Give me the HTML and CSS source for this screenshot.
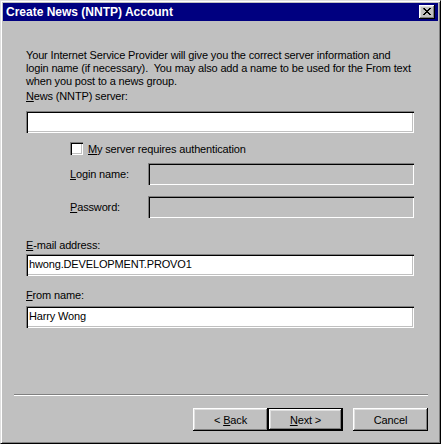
FILE: index.html
```html
<!DOCTYPE html>
<html>
<head>
<meta charset="utf-8">
<link rel="stylesheet" href="styles.css">
</head>
<body>
<div class="window">
  <div class="titlebar">
    <span class="title">Create News (NNTP) Account</span>
    <div class="close">
      <svg width="8" height="7" viewBox="0 0 8 7"><path d="M0 0h2v1h1v1h2v-1h1v-1h2v1h-1v1h-1v1h-1v1h1v1h1v1h1v1h-2v-1h-1v-1h-2v1h-1v1h-2v-1h1v-1h1v-1h1v-1h-1v-1h-1z" fill="#000"/></svg>
    </div>
  </div>
  <div class="content">
    <p class="intro">Your Internet Service Provider will give you the correct server information and<br>login name (if necessary).&nbsp; You may also add a name to be used for the From text<br>when you post to a news group.</p>
    <div class="label label-news"><u>N</u>ews (NNTP) server:</div>
    <div class="edit"></div>
    <div class="auth">
      <div class="check-row"><span class="checkbox"></span><span><u>M</u>y server requires authentication</span></div>
      <div class="field-row field-login"><span class="field-label"><u>L</u>ogin name:</span><div class="edit disabled"></div></div>
      <div class="field-row field-pass"><span class="field-label"><u>P</u>assword:</span><div class="edit disabled"></div></div>
    </div>
    <div class="label label-email"><u>E</u>-mail address:</div>
    <div class="edit">hwong.DEVELOPMENT.PROVO1</div>
    <div class="label label-from"><u>F</u>rom name:</div>
    <div class="edit">Harry Wong</div>
  </div>
  <div class="footer">
    <div class="separator"></div>
    <div class="buttons">
      <div class="btn"><span>&lt; <u>B</u>ack</span></div>
      <div class="btn default"><span><u>N</u>ext &gt;</span></div>
      <div class="btn cancel"><span>Cancel</span></div>
    </div>
  </div>
</div>
</body>
</html>
```

FILE: styles.css
```css
body {
  margin: 0;
  font-family: "Liberation Sans", Arial, sans-serif;
  font-size: 11px;
  letter-spacing: -0.15px;
  color: #000;
  background: #c0c0c0;
}
u { text-decoration-thickness: 1px; text-underline-offset: 1px; }
.window {
  width: 441px;
  height: 444px;
  box-sizing: border-box;
  background: #c0c0c0;
  border: 1px solid;
  border-color: #dfdfdf #000 #000 #dfdfdf;
  box-shadow: inset 1px 1px #fff, inset -1px -1px #808080;
  padding: 2px;
  display: flex;
  flex-direction: column;
}
.titlebar {
  height: 18px;
  background: #000080;
  color: #fff;
  display: flex;
  align-items: center;
  justify-content: space-between;
  padding: 0 3px 0 3px;
}
.title { font-weight: bold; font-size: 12px; letter-spacing: 0; }
.close {
  width: 16px;
  height: 14px;
  box-sizing: border-box;
  background: #c0c0c0;
  box-shadow: inset -1px -1px #000, inset 1px 1px #fff, inset -2px -2px #808080, inset 2px 2px #dfdfdf;
  display: flex;
  align-items: center;
  justify-content: center;
  padding: 0 1px 1px 0;
}
.close svg { display: block; }
.content {
  padding: 0 24px 0 23px;
}
.intro {
  margin: 28px 0 0;
  line-height: 13px;
  white-space: nowrap;
}
.label { height: 13px; line-height: 13px; }
.label-news { margin-top: 2px; margin-bottom: 8px; }
.label-email { margin-top: 21px; margin-bottom: 2px; }
.label-from { margin-top: 13px; margin-bottom: 4px; }
.edit {
  height: 22px;
  box-sizing: border-box;
  background: #fff;
  box-shadow: inset 1px 1px #808080, inset 2px 2px #000, inset -1px -1px #fff, inset -2px -2px #c0c0c0;
  line-height: 20px;
  padding-left: 3px;
  white-space: nowrap;
}
.edit.disabled { background: #c0c0c0; flex: 1; }
.auth { margin-left: 44px; }
.check-row {
  display: flex;
  align-items: center;
  gap: 5px;
  margin-top: 9px;
  height: 13px;
}
.checkbox {
  width: 13px;
  height: 13px;
  box-sizing: border-box;
  background: #fff;
  box-shadow: inset 1px 1px #808080, inset 2px 2px #000, inset -1px -1px #fff, inset -2px -2px #c0c0c0;
}
.field-row { display: flex; align-items: center; }
.field-login { margin-top: 8px; }
.field-pass { margin-top: 11px; }
.field-label { width: 78px; }
.footer { margin-top: auto; padding: 0 10px 10px 11px; }
.separator {
  height: 0;
  border-top: 1px solid #808080;
  border-bottom: 1px solid #fff;
}
.buttons {
  display: flex;
  justify-content: flex-end;
  margin-top: 12px;
}
.btn {
  width: 75px;
  height: 23px;
  box-sizing: border-box;
  background: #c0c0c0;
  box-shadow: inset -1px -1px #000, inset 1px 1px #fff, inset -2px -2px #808080, inset 2px 2px #dfdfdf;
  display: flex;
  align-items: center;
  justify-content: center;
}
.btn.default {
  border: 1px solid #000;
}
.btn.cancel { margin-left: 10px; }
```
